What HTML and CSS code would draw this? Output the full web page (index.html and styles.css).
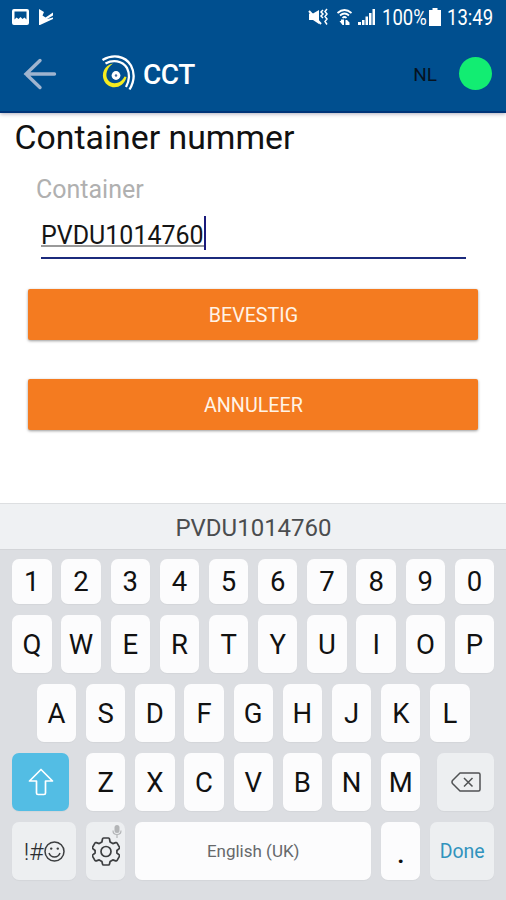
FILE: index.html
```html
<!DOCTYPE html>
<html lang="nl">
<head>
<meta charset="utf-8">
<title>CCT</title>
<link rel="stylesheet" href="styles.css">
</head>
<body>
<div class="screen">
  <header class="top">
    <div class="status">
      <svg class="status-left" width="44" height="20" viewBox="0 0 44 20">
        <path fill="#fff" fill-rule="evenodd" d="M2 1h13q2 0 2 2v12q0 2-2 2H2q-2 0-2-2V3q0-2 2-2zM2.500 3.500v8l2-2 2 1.500 2-2 2 2 2-1.500 2 2v-8z"/>
        <path fill="#fff" d="M27 1l5 3-1.500 3.500 3 2L41 4.500v3L35 11l6-1.500v1.500L28 17h-1z"/>
      </svg>
      <div class="status-right">
        <svg class="status-icons" width="70" height="20" viewBox="0 0 70 20">
          <path fill="#fff" d="M1 5.500h4l6-3.500v14l-6-4H1z"/>
          <path stroke="#fff" stroke-width="2" d="M1 3l12 13"/>
          <path fill="none" stroke="#fff" stroke-width="1.500" d="M15 2l-2 2 2 2-2 2 2 2M19 1l-2 2.500 2 2.500-2 2.500 2 2.500-2 2.500 2 3"/>
          <path fill="none" stroke="#fff" stroke-width="1.700" d="M29.500 5q7-6 14 0M32 7.500q4.500-4 9 0M34.500 10q2-2 4 0"/>
          <path fill="#fff" d="M31.500 13H33v-1.500h3V17h-1.500zM37.500 17v-5H39l2.500 2.500V17z"/>
          <path fill="#fff" d="M50 14h3v3h-3zM54 12h2.500v5H54zM57.500 8.500H60V17h-2.500zM61 5h2.500v12H61zM64.500 1H67v16h-2.500z"/>
        </svg>
        <span class="battery-text">100%</span>
        <svg class="battery" width="12" height="18" viewBox="0 0 12 18"><path fill="#fff" d="M3.500 0h5v2H12v16H0V2h3.500z"/></svg>
        <span class="clock">13:49</span>
      </div>
    </div>
    <div class="appbar">
      <svg class="back" width="34" height="32" viewBox="0 0 34 32"><path fill="none" stroke="#9fb4cf" stroke-width="3.400" stroke-linecap="round" d="M17 2.500L3 16l14 13.500M3 16h28.500"/></svg>
      <svg class="logo" width="35" height="36" viewBox="0 0 35 36">
        <g fill="none" stroke="#fff" stroke-width="2.300">
          <path d="M1.500 5C12-1 24 .5 30 10.500Q36 22 28.500 34.500"/>
          <path d="M4.500 8.500C12 4.500 21 5.500 26 13Q30.500 22 25 32"/>
        </g>
        <path fill="#f4ec20" d="M12 8.500C3 10.500 0 19 3 25.500c4.500 10 19.500 9 22.500-3.500l-2-.5c-3 7-12 9-16.500 3.500C3.500 20 6 12.500 12 8.500z"/>
        <circle cx="15" cy="20.500" r="4.400" fill="#fff"/><circle cx="15" cy="20.500" r="1.200" fill="#456b9f"/>
      </svg>
      <span class="app-name">CCT</span>
      <span class="lang">NL</span>
      <span class="online"></span>
    </div>
  </header>
  <main class="content">
    <h1 class="title">Container nummer</h1>
    <div class="label">Container</div>
    <div class="field"><span class="value">PVDU1014760</span><span class="caret"></span></div>
    <div class="button"><span>BEVESTIG</span></div>
    <div class="button"><span>ANNULEER</span></div>
  </main>
  <div class="suggestion"><span>PVDU1014760</span></div>
  <div class="keyboard">
    <div class="row row-digits"><span class="key">1</span><span class="key">2</span><span class="key">3</span><span class="key">4</span><span class="key">5</span><span class="key">6</span><span class="key">7</span><span class="key">8</span><span class="key">9</span><span class="key">0</span></div>
    <div class="row"><span class="key">Q</span><span class="key">W</span><span class="key">E</span><span class="key">R</span><span class="key">T</span><span class="key">Y</span><span class="key">U</span><span class="key">I</span><span class="key">O</span><span class="key">P</span></div>
    <div class="row"><span class="key">A</span><span class="key">S</span><span class="key">D</span><span class="key">F</span><span class="key">G</span><span class="key">H</span><span class="key">J</span><span class="key">K</span><span class="key">L</span></div>
    <div class="row row-spread">
      <span class="key key-shift"><svg width="26" height="28" viewBox="0 0 26 28"><path fill="none" stroke="#fff" stroke-width="1.700" stroke-linejoin="round" d="M13 1.500L24.500 13H17.500v12q0 1.500-1.500 1.500h-6q-1.500 0-1.500-1.500V13H1.500z"/></svg></span>
      <span class="letters"><span class="key">Z</span><span class="key">X</span><span class="key">C</span><span class="key">V</span><span class="key">B</span><span class="key">N</span><span class="key">M</span></span>
      <span class="key key-delete"><svg width="30" height="20" viewBox="0 0 30 20"><path fill="none" stroke="#505254" stroke-width="1.500" stroke-linejoin="round" d="M9 1h18.500q1.500 0 1.500 1.500v15q0 1.500-1.500 1.500H9L1.500 11.500q-1-1.500 0-3zM13 6l8.500 8.500M21.500 6L13 14.500"/></svg></span>
    </div>
    <div class="row">
      <span class="key key-symbols"><span>!#</span><svg width="21" height="21" viewBox="0 0 21 21"><g fill="none" stroke="#3c3e40" stroke-width="1.500"><circle cx="10.500" cy="10.500" r="9.500"/><path d="M5 12q1.500 4 5.500 4t5.500-4"/></g><circle cx="7.200" cy="7.600" r="1.200" fill="#3c3e40"/><circle cx="13.800" cy="7.600" r="1.200" fill="#3c3e40"/></svg></span>
      <span class="key key-settings">
        <svg class="gear" width="28" height="29" viewBox="0 0 28 29"><g fill="none" stroke="#3c3e40" stroke-width="1.700" stroke-linejoin="round"><path d="M11.500 1h5q.8 0 1 1l.6 3 2.700 1.600 2.900-1q.9-.3 1.400.5l2.300 4q.5.900-.2 1.500L24.900 13.500v2.500l2.300 1.900q.7.600.2 1.500l-2.300 4q-.5.800-1.400.5l-2.900-1-2.700 1.600-.6 2.500q-.2 1-1 1h-5q-.8 0-1-1l-.6-2.500-2.700-1.600-2.900 1q-.9.300-1.400-.5l-2.300-4q-.5-.9.200-1.500L3.100 16v-2.500L.8 11.600q-.7-.6-.2-1.500l2.300-4q.5-.8 1.400-.5l2.900 1L9.900 5l.6-3q.2-1 1-1z"/><circle cx="14" cy="14.500" r="5"/></g></svg>
        <svg class="mic" width="10" height="13" viewBox="0 0 10 13"><rect x="2.500" y="0" width="5" height="8" rx="2.500" fill="#b3b5b7"/><path fill="none" stroke="#b3b5b7" stroke-width="1.200" d="M1 5.500q0 4 4 4t4-4M5 9.500V13"/></svg>
      </span>
      <span class="key key-space">English (UK)</span>
      <span class="key key-dot">.</span>
      <span class="key key-done">Done</span>
    </div>
  </div>
</div>
</body>
</html>
```
FILE: styles.css
```css
* { box-sizing: border-box; }
body { margin: 0; font-family: Roboto, sans-serif; background: #fff; }
svg { display: block; flex: none; }
.screen { width: 506px; height: 900px; display: flex; flex-direction: column; overflow: hidden; }
.top { height: 113px; flex: none; background: #004f8f; border-bottom: 2px solid #003478; box-shadow: 0 1px 4px rgba(30, 20, 60, .35); color: #fff; }
.status { height: 35px; padding: 8px 12px 0 12px; display: flex; justify-content: space-between; }
.status-right { display: flex; }
.battery-text { width: 45px; margin-left: 4px; font-size: 21.500px; line-height: 20px; transform: scaleX(.86); transform-origin: left; }
.battery { margin-left: 2px; }
.clock { width: 47px; margin-left: 6px; font-size: 21.500px; line-height: 20px; transform: scaleX(.86); transform-origin: left; white-space: nowrap; }
.appbar { height: 76px; padding-left: 23px; padding-right: 14px; display: flex; align-items: center; }
.back { margin-top: 1px; }
.logo { margin-left: 44px; }
.app-name { margin: 2px 0 0 7px; font-size: 28px; font-weight: 500; letter-spacing: -.5px; }
.lang { margin: 2px 0 0 auto; font-size: 19px; color: #06131f; }
.online { width: 33px; height: 33px; margin-left: 22px; border-radius: 50%; background: #12ed72; }
.content { height: 390px; flex: none; }
.title { margin: 4px 0 0 14.500px; font-size: 33.800px; line-height: 42px; font-weight: 400; color: #111; white-space: nowrap; }
.label { margin: 16px 0 0 36px; font-size: 25px; line-height: 30px; color: #b0b0b0; }
.field { width: 425px; height: 43px; margin: 11px 0 0 41px; border-bottom: 2px solid #1b2a7c; display: flex; }
.value { height: 31px; font-size: 25px; line-height: 39px; color: #151515; border-bottom: 2px solid #999; }
.caret { width: 2px; height: 34px; background: #1b1b7c; }
.button { width: 450px; height: 51px; margin: 30px 0 0 28.400px; padding-top: 1px; border-radius: 2px; background: #f47b20; box-shadow: 0 1px 3px rgba(0, 0, 0, .4); display: flex; align-items: center; justify-content: center; color: #fff3e6; font-size: 19.700px; }
.button + .button { margin-top: 39px; }
.suggestion { height: 46px; flex: none; background: #eff1f3; border-top: 1px solid #dddfe1; display: flex; align-items: center; justify-content: center; padding: 2px 0 0 1px; font-size: 24px; color: #4b4d4f; }
.keyboard { height: 351px; flex: none; background: #dcdee2; border-top: 1px solid #d3d5d8; padding: 9px 11.700px 0 12.100px; display: flex; flex-direction: column; gap: 11px; }
.row { height: 58px; display: flex; justify-content: center; gap: 9.800px; }
.row-digits { height: 45px; }
.row-spread { justify-content: space-between; gap: 0; }
.letters { display: flex; gap: 9.800px; }
.key { width: 39.400px; border-radius: 7px; background: #fcfcfd; display: flex; align-items: center; justify-content: center; font-size: 27.500px; color: #111; box-shadow: 0 1px 1px rgba(0, 0, 0, .04); }
.key-shift { width: 57px; background: #53bde4; }
.key-delete { width: 57px; background: #edeff1; }
.key-symbols { width: 64px; background: #edeff1; font-size: 24.500px; font-weight: 300; color: #2c2e30; }
.key-settings { background: #edeff1; position: relative; }
.mic { position: absolute; top: 3px; right: 3px; }
.key-space { width: 236px; font-size: 17px; color: #66686a; }
.key-dot { padding-top: 4px; font-weight: 500; }
.key-done { width: 64px; background: #edeff1; font-size: 19.500px; color: #3193bd; }
```
